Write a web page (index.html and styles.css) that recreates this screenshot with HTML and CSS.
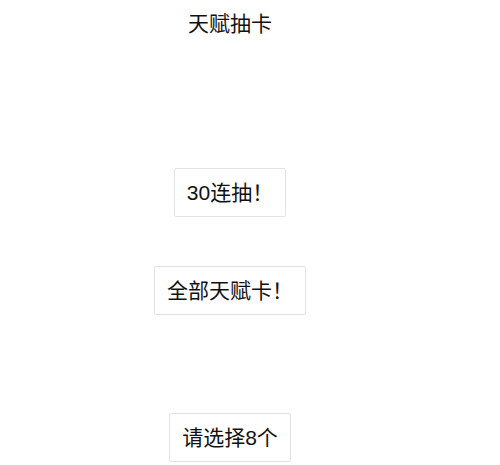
FILE: index.html
```html
<!DOCTYPE html>
<html>
<head>
<meta charset="utf-8">
<link rel="stylesheet" href="styles.css">
</head>
<body>
<div class="page">
  <h1 class="title">天赋抽卡</h1>
  <button class="btn btn-first">30连抽！</button>
  <button class="btn btn-second">全部天赋卡！</button>
  <button class="btn btn-third">请选择8个</button>
</div>
</body>
</html>
```
FILE: styles.css
```css
html, body {
  margin: 0;
  padding: 0;
  background: #ffffff;
}
.page {
  width: 460px;
  display: flex;
  flex-direction: column;
  align-items: center;
  font-family: "Liberation Sans", "Noto Sans CJK SC", sans-serif;
  color: #111111;
}
.title {
  margin: 10px 0 0 0;
  font-size: 21px;
  font-weight: normal;
  line-height: 28px;
}
.btn {
  font-family: "Liberation Sans", "Noto Sans CJK SC", sans-serif;
  font-size: 21px;
  color: #111111;
  background: #ffffff;
  border: 1px solid #e3e3e3;
  border-radius: 2px;
  height: 49px;
  padding: 0 12px;
  box-sizing: border-box;
  line-height: 47px;
}
.btn-first {
  margin-top: 130px;
}
.btn-second {
  margin-top: 49px;
}
.btn-third {
  margin-top: 98px;
}
```
